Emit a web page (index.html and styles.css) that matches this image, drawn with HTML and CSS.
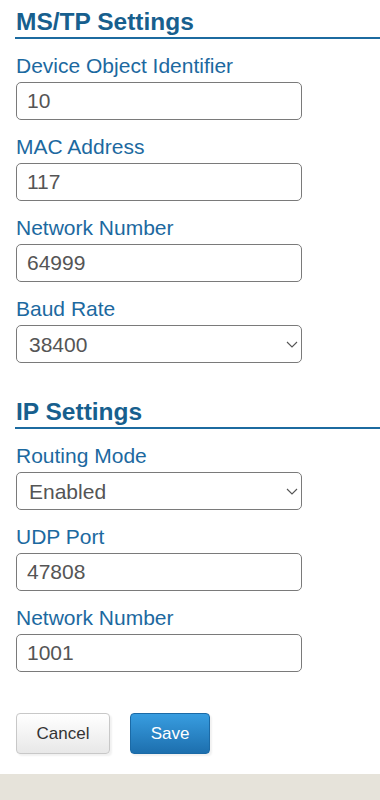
FILE: index.html
```html
<!DOCTYPE html>
<html>
<head>
<meta charset="utf-8">
<title>Settings</title>
<link rel="stylesheet" href="styles.css">
</head>
<body>
<div class="panel">
	<h2 class="sect">MS/TP Settings</h2>
	<div class="field">
		<label for="devid">Device Object Identifier</label>
		<input id="devid" class="inp" type="text" value="10">
	</div>
	<div class="field">
		<label for="mac">MAC Address</label>
		<input id="mac" class="inp" type="text" value="117">
	</div>
	<div class="field">
		<label for="net1">Network Number</label>
		<input id="net1" class="inp" type="text" value="64999">
	</div>
	<div class="field">
		<label for="baud">Baud Rate</label>
		<div class="selwrap">
			<select id="baud" class="inp sel">
				<option>9600</option>
				<option>19200</option>
				<option selected>38400</option>
				<option>76800</option>
			</select>
			<svg class="chev" width="12" height="7" viewBox="0 0 12 7"><path d="M1 1 L6 6 L11 1" fill="none" stroke="#555" stroke-width="1.1"/></svg>
		</div>
	</div>

	<h2 class="sect sect2">IP Settings</h2>
	<div class="field">
		<label for="route">Routing Mode</label>
		<div class="selwrap">
			<select id="route" class="inp sel">
				<option selected>Enabled</option>
				<option>Disabled</option>
			</select>
			<svg class="chev" width="12" height="7" viewBox="0 0 12 7"><path d="M1 1 L6 6 L11 1" fill="none" stroke="#555" stroke-width="1.1"/></svg>
		</div>
	</div>
	<div class="field">
		<label for="udp">UDP Port</label>
		<input id="udp" class="inp" type="text" value="47808">
	</div>
	<div class="field">
		<label for="net2">Network Number</label>
		<input id="net2" class="inp" type="text" value="1001">
	</div>

	<div class="actions">
		<button class="btn cancel">Cancel</button>
		<button class="btn save">Save</button>
	</div>
</div>
</body>
</html>
```

FILE: styles.css
```css
body {
	margin: 0;
	background-color: #e6e3da;
	font-family: "Liberation Sans", Arial, sans-serif;
}
.panel {
	background-color: #fff;
	padding: 8px 0 20px 15px;
	box-shadow: 0px 1px 2px rgba(0, 0, 0, 0.35);
}
.sect {
	margin: 0;
	font-size: 24.5px;
	line-height: 28px;
	font-weight: bold;
	color: #175f8e;
	padding: 0 0 1px 1px;
	border-bottom: 2px solid #1c6ba0;
}
.sect2 {
	margin-top: 35px;
}
.field {
	margin-top: 15px;
}
.field label {
	display: block;
	font-size: 21px;
	line-height: 24px;
	color: #1c69a0;
	padding-left: 1px;
	margin-bottom: 4px;
}
.inp {
	display: block;
	box-sizing: border-box;
	width: 286px;
	height: 38px;
	margin-left: 1px;
	padding: 0 10px;
	border: 1px solid #7a7a7a;
	border-radius: 5px;
	font-family: "Liberation Sans", Arial, sans-serif;
	font-size: 21px;
	color: #555;
	background-color: #fff;
}
.selwrap {
	position: relative;
	width: 287px;
}
.sel {
	padding-left: 12px;
	appearance: none;
	-webkit-appearance: none;
}
.chev {
	position: absolute;
	right: 4px;
	top: 16px;
	pointer-events: none;
}
.actions {
	margin-top: 41px;
	display: flex;
	gap: 20px;
	padding-left: 1px;
}
.btn {
	height: 41px;
	border-radius: 4px;
	font-family: "Liberation Sans", Arial, sans-serif;
	font-size: 17px;
	cursor: pointer;
	box-shadow: 2px 2px 2px rgba(0, 0, 0, 0.06);
}
.cancel {
	width: 94px;
	color: #333;
	border: 1px solid #c8c8c8;
	background: linear-gradient(#ffffff, #e8e8e8);
}
.save {
	width: 80px;
	color: #fff;
	border: 1px solid #1b6aa6;
	background: linear-gradient(#389de0, #1d6fae);
}
```
